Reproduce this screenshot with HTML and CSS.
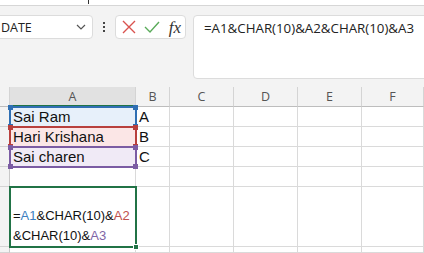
FILE: index.html
```html
<!DOCTYPE html>
<html lang="en">

<head>
    <meta charset="UTF-8">
    <meta name="viewport" content="width=device-width, initial-scale=1.0">
    <title>CHAR(10) formula</title>
    <link rel="stylesheet" href="styles.css">
</head>

<body>
<div class="top_strip"><span class="tick"></span></div>

<div class="toolbar">
    <div class="namebox">
        <span>DATE</span>
        <svg width="10" height="6" viewBox="0 0 10 6"><path d="M1 1 L5 5 L9 1" fill="none" stroke="#555" stroke-width="1.2"/></svg>
    </div>
    <div class="dots"><i></i><i></i><i></i></div>
    <div class="fbtns">
        <svg width="14" height="14" viewBox="0 0 14 14"><path d="M1 1 L13 13 M13 1 L1 13" stroke="#d9534f" stroke-width="1.4" fill="none"/></svg>
        <svg width="16" height="14" viewBox="0 0 16 14"><path d="M1 7 L6 12 L15 2" stroke="#5aab5a" stroke-width="1.4" fill="none"/></svg>
        <span class="fx">fx</span>
    </div>
    <div class="formula">=A1&amp;CHAR(10)&amp;A2&amp;CHAR(10)&amp;A3</div>
</div>

<div class="sheet">
    <div class="hd corner"></div>
    <div class="hd col sel">A</div>
    <div class="hd col">B</div>
    <div class="hd col">C</div>
    <div class="hd col">D</div>
    <div class="hd col">E</div>
    <div class="hd col">F</div>

    <div class="rh"></div>
    <div class="cell name fill_blue">Sai Ram</div>
    <div class="cell name">A</div>
    <div class="cell"></div><div class="cell"></div><div class="cell"></div><div class="cell"></div>

    <div class="rh"></div>
    <div class="cell name fill_red">Hari Krishana</div>
    <div class="cell name">B</div>
    <div class="cell"></div><div class="cell"></div><div class="cell"></div><div class="cell"></div>

    <div class="rh"></div>
    <div class="cell name fill_purple">Sai charen</div>
    <div class="cell name">C</div>
    <div class="cell"></div><div class="cell"></div><div class="cell"></div><div class="cell"></div>

    <div class="rh"></div>
    <div class="cell"></div><div class="cell"></div><div class="cell"></div><div class="cell"></div><div class="cell"></div><div class="cell"></div>

    <div class="rh"></div>
    <div class="cell wrap_text">
        <span>=<b class="c_blue">A1</b>&amp;CHAR(10)&amp;<b class="c_red">A2</b></span>
        <span>&amp;CHAR(10)&amp;<b class="c_purple">A3</b></span>
    </div>
    <div class="cell"></div><div class="cell"></div><div class="cell"></div><div class="cell"></div><div class="cell"></div>

    <div class="rh"></div>
    <div class="cell"></div><div class="cell"></div><div class="cell"></div><div class="cell"></div><div class="cell"></div><div class="cell"></div>

    <!-- reference highlight boxes -->
    <div class="ref ref_blue"><i class="h tl"></i><i class="h tr"></i><i class="h bl"></i><i class="h br"></i></div>
    <div class="ref ref_red"><i class="h tl"></i><i class="h tr"></i><i class="h bl"></i><i class="h br"></i></div>
    <div class="ref ref_purple"><i class="h tl"></i><i class="h tr"></i><i class="h bl"></i><i class="h br"></i></div>
    <div class="active_cell"><i class="h br"></i></div>
</div>
</body>

</html>
```

FILE: styles.css
```css
* {
    margin: 0;
    padding: 0;
    box-sizing: border-box;
}

body {
    width: 424px;
    height: 253px;
    overflow: hidden;
    background: #fff;
    font-family: "Open Sans", "Liberation Sans", sans-serif;
    color: #222;
}

.top_strip {
    height: 6px;
    background: #fff;
    border-bottom: 1px solid #d6d6d6;
    position: relative;
}

.top_strip .tick {
    position: absolute;
    left: 88px;
    top: 0;
    width: 1px;
    height: 4px;
    background: #333;
}

.toolbar {
    height: 81px;
    background: #f3f3f3;
    display: flex;
    align-items: flex-start;
    padding-top: 9px;
}

.namebox {
    margin-left: -10px;
    width: 103px;
    height: 24px;
    background: #fff;
    border: 1px solid #dcdcdc;
    border-radius: 4px;
    display: flex;
    align-items: center;
    justify-content: space-between;
    padding: 0 6px 0 10px;
    font-size: 12.5px;
}

.dots {
    width: 22px;
    height: 24px;
    display: flex;
    flex-direction: column;
    align-items: center;
    justify-content: center;
    gap: 2px;
}

.dots i {
    width: 2px;
    height: 2px;
    background: #444;
}

.fbtns {
    width: 71px;
    height: 24px;
    background: #fff;
    border: 1px solid #dcdcdc;
    border-radius: 4px;
    display: flex;
    align-items: center;
    justify-content: space-between;
    padding: 0 4px 0 6px;
}

.fx {
    font-family: "Liberation Serif", serif;
    font-style: italic;
    font-size: 17px;
    color: #333;
    line-height: 1;
}

.formula {
    margin-left: 7px;
    flex: 1;
    margin-right: -10px;
    height: 64px;
    background: #fff;
    border: 1px solid #dcdcdc;
    border-radius: 4px;
    padding: 3px 0 0 10px;
    font-size: 13.3px;
    color: #222;
}

.sheet {
    position: relative;
    display: grid;
    grid-template-columns: 10px 126px 34px 64px 64px 64px 62px;
    grid-template-rows: 20px 20px 20px 20px 20px 60px 6px;
    font-family: "Liberation Sans", sans-serif;
    font-size: 13px;
}

.hd {
    background: #f3f3f3;
    border-right: 1px solid #d4d4d4;
    border-bottom: 1px solid #bdbdbd;
    color: #555;
    font-family: "Open Sans", sans-serif;
    font-size: 12.5px;
    display: flex;
    align-items: center;
    justify-content: center;
}

.hd.sel {
    background: #e1e1e1;
    border-bottom: 2px solid #217346;
}

.rh {
    background: #f3f3f3;
    border-right: 1px solid #c8c8c8;
    border-bottom: 1px solid #d4d4d4;
}

.cell {
    border-right: 1px solid #dadada;
    border-bottom: 1px solid #dadada;
    display: flex;
    align-items: center;
    padding-left: 3px;
    white-space: nowrap;
    color: #111;
}

.cell.name {
    font-size: 15px;
}

.fill_blue {
    background: #e7f0fa;
}

.fill_red {
    background: #fbe6e6;
}

.fill_purple {
    background: #f0eaf6;
}

.wrap_text {
    flex-direction: column;
    align-items: flex-start;
    justify-content: flex-end;
    line-height: 20px;
}

.wrap_text b {
    font-weight: normal;
}

.c_blue {
    color: #3c7fc0;
}

.c_red {
    color: #c0504d;
}

.c_purple {
    color: #7f65a6;
}

.ref {
    position: absolute;
    left: 9px;
    width: 128px;
    height: 22px;
    border: 2px solid;
}

.ref_blue {
    top: 19px;
    border-color: #2f6fb3;
    color: #2f6fb3;
}

.ref_red {
    top: 39px;
    border-color: #b8403d;
    color: #b8403d;
}

.ref_purple {
    top: 59px;
    border-color: #7b5ca3;
    color: #7b5ca3;
}

.h {
    position: absolute;
    width: 5px;
    height: 5px;
    background: currentColor;
}

.h.tl { left: -3px; top: -3px; }
.h.tr { right: -3px; top: -3px; }
.h.bl { left: -3px; bottom: -3px; }
.h.br { right: -3px; bottom: -3px; }

.active_cell {
    position: absolute;
    left: 9px;
    top: 99px;
    width: 128px;
    height: 62px;
    border: 2px solid #217346;
    color: #217346;
}

.active_cell .h {
    border: 1px solid #fff;
    width: 6px;
    height: 6px;
    right: -4px;
    bottom: -4px;
}
```
